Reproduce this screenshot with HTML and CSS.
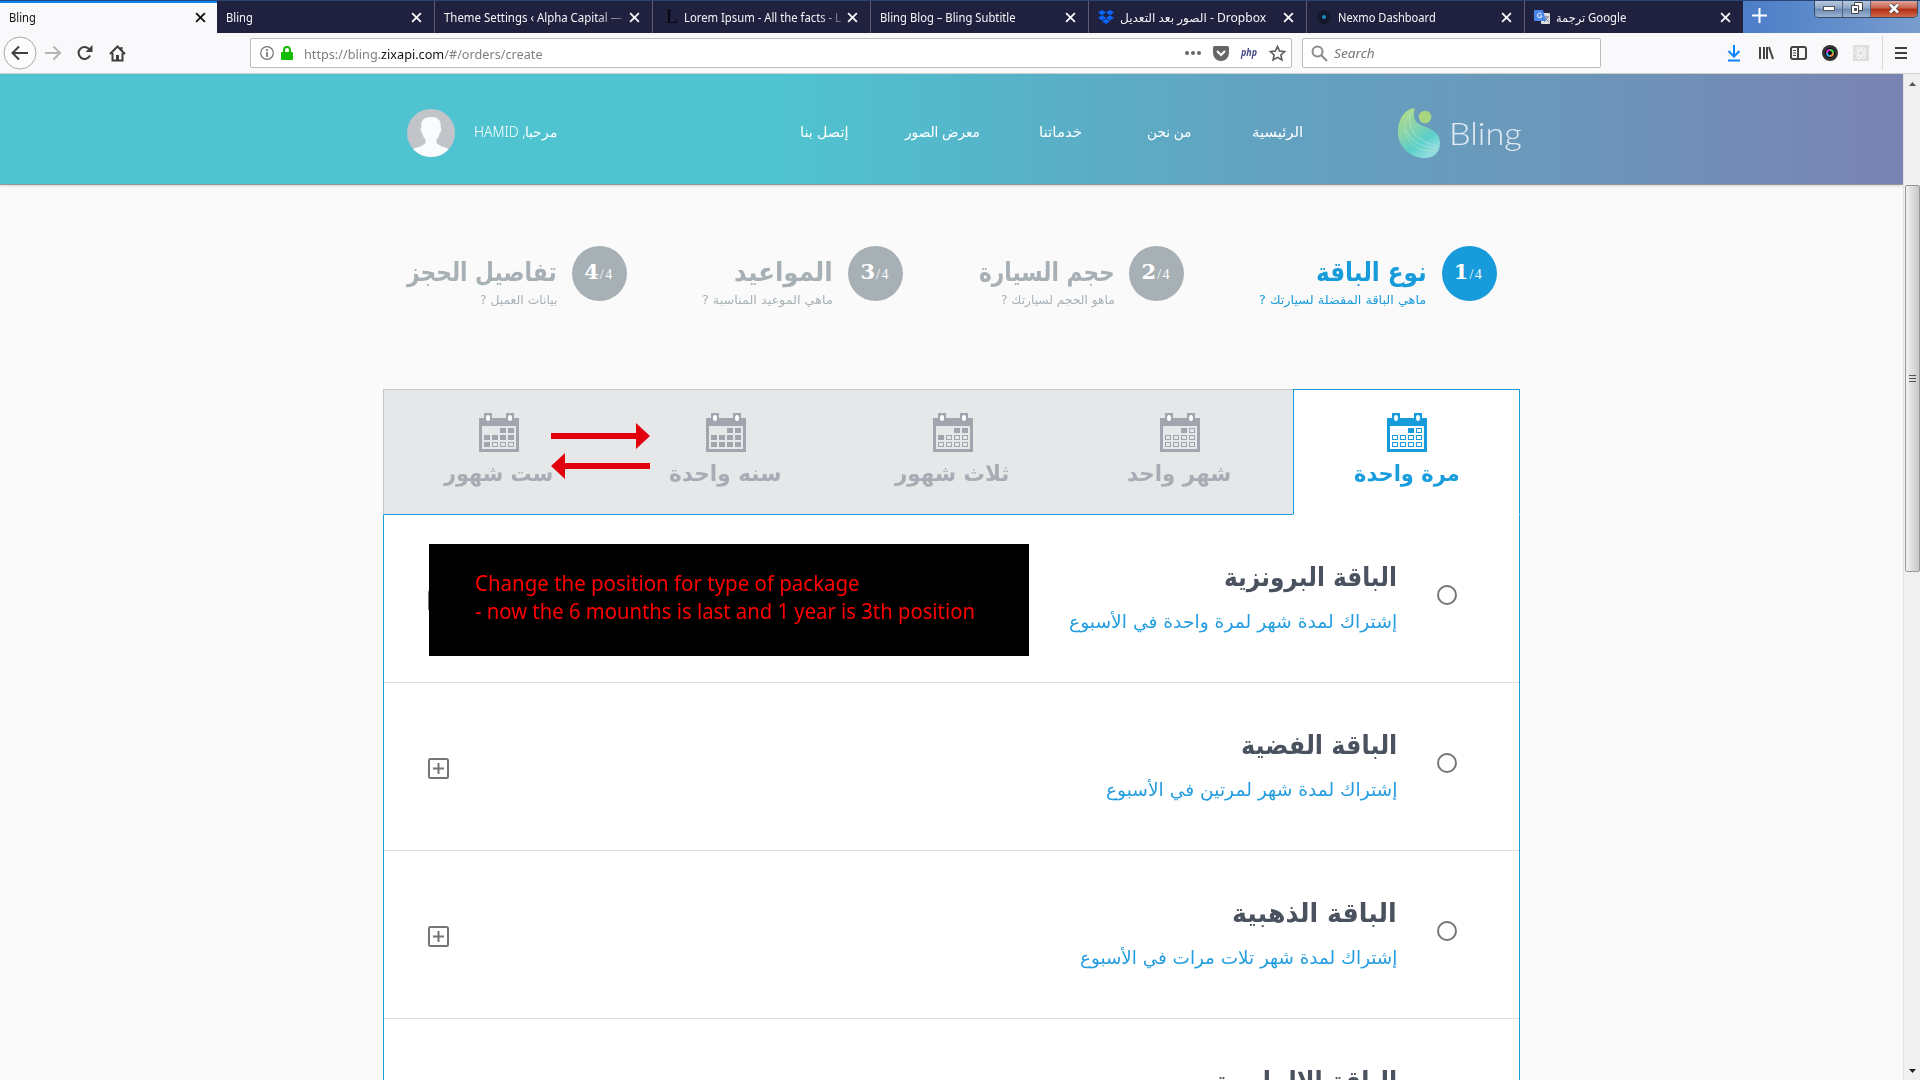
FILE: index.html
```html
<!DOCTYPE html>
<html lang="ar">
<head>
<meta charset="utf-8">
<title>Bling</title>
<link rel="stylesheet" href="styles.css">
</head>
<body>
<svg class="defs" width="0" height="0">
  <defs>
    <symbol id="cal" viewBox="0 0 40 39">
      <path fill="currentColor" fill-rule="evenodd" d="M0 5h5V0h8v5h14V0h8v5h5v34H0zM3 13v23h34V13z"/>
      <ellipse class="hole" cx="9" cy="5" rx="2" ry="3"/><ellipse class="hole" cx="31" cy="5" rx="2" ry="3"/>
    </symbol>
    <symbol id="plus" viewBox="0 0 21 21"><rect x="1" y="1" width="19" height="19" rx="1.500" fill="none" stroke="#757575" stroke-width="2"/><path d="M10.500 5v11M5 10.500h11" stroke="#757575" stroke-width="2"/></symbol>
    <symbol id="x" viewBox="0 0 10 10"><path d="M1 1l8 8M9 1l-8 8" stroke="currentColor" stroke-width="1.700"/></symbol>
    <linearGradient id="leaf" x1="0" y1="0" x2=".6" y2="1"><stop offset="0" stop-color="#b9dc7c"/><stop offset=".45" stop-color="#86d3ae"/><stop offset=".75" stop-color="#5bcfc9"/><stop offset="1" stop-color="#8fdde0"/></linearGradient>
  </defs>
</svg>

<div class="tabs">
  <div class="tab active"><span class="fit" style="width:27px">Bling</span><svg class="close"><use href="#x"/></svg></div>
  <div class="tab"><span class="fit" style="width:27px">Bling</span><svg class="close"><use href="#x"/></svg></div>
  <div class="tab"><span class="fit fade" style="width:178px">Theme Settings ‹ Alpha Capital —</span><svg class="close"><use href="#x"/></svg></div>
  <div class="tab"><i class="fav lorem">L</i><span class="fit fade" style="width:157px">Lorem Ipsum - All the facts - L</span><svg class="close"><use href="#x"/></svg></div>
  <div class="tab"><span class="fit" style="width:136px">Bling Blog – Bling Subtitle</span><svg class="close"><use href="#x"/></svg></div>
  <div class="tab"><svg class="fav" viewBox="0 0 16 16" fill="#0a66ff"><path d="M4 1l4 2.600L4 6.200 0 3.600zM12 1l4 2.600-4 2.600-4-2.600zM4 6.200l4 2.600-4 2.600L0 8.800zM12 6.200l4 2.600-4 2.600-4-2.600zM4 12.300l4-2.600 4 2.600-4 2.600z"/></svg><span class="fit" style="width:146px">الصور بعد التعديل - Dropbox</span><svg class="close"><use href="#x"/></svg></div>
  <div class="tab"><svg class="fav" viewBox="0 0 16 16"><circle cx="8" cy="8" r="7" fill="#15182b"/><circle cx="8" cy="8" r="2" fill="#178fc4"/></svg><span class="fit" style="width:98px">Nexmo Dashboard</span><svg class="close"><use href="#x"/></svg></div>
  <div class="tab"><svg class="fav" viewBox="0 0 16 16"><rect x="7" y="4" width="9" height="11" rx="1" fill="#ddd"/><path d="M10 8h5M12.500 7v1M14 8l-4 5M11 9l4 4" stroke="#7a8590" fill="none"/><path d="M1 1h8l3 11H1a1 1 0 0 1-1-1V2a1 1 0 0 1 1-1z" fill="#4a86e8"/><path d="M7.500 5A2.300 2.300 0 1 0 8 7H5.800" fill="none" stroke="#fff"/></svg><span class="fit" style="width:70px">ترجمة Google</span><svg class="close"><use href="#x"/></svg></div>
  <div class="titlebar">
    <svg class="newtab" width="15" height="15"><path d="M7.500 0v15M0 7.500h15" stroke="#fff" stroke-width="2"/></svg>
    <div class="winbtns">
      <span class="wb"><svg width="12" height="5"><rect x=".5" y=".5" width="11" height="4" fill="#fff" stroke="#555"/></svg></span>
      <span class="wb"><svg width="12" height="12" fill="#fff" stroke="#444"><path d="M3.500.5h8v8h-8z"/><path d="M.5 3.500h7v8h-7z"/><path d="M3.500 6.500h2v2h-2z" fill="#567"/></svg></span>
      <span class="wb red"><svg width="12" height="11"><path d="M2 1.500l8 8M10 1.500l-8 8" stroke="#444" stroke-width="4"/><path d="M2 1.500l8 8M10 1.500l-8 8" stroke="#fff" stroke-width="2.500"/></svg></span>
    </div>
  </div>
</div>

<div class="toolbar">
  <div class="navbtns">
    <svg width="34" height="34" fill="none"><circle cx="17" cy="17" r="16" fill="#fcfcfc" stroke="#a9a9a9"/><path d="M25 17H10M16 10.500L9.500 17l6.500 6.500" stroke="#3f3f3f" stroke-width="2"/></svg>
    <svg width="16" height="16" fill="none"><path d="M0 8h14M8.500 1.500L15 8l-6.500 6.500" stroke="#b5b5b5" stroke-width="2"/></svg>
    <svg width="16" height="16" fill="none"><path d="M13 10.500A6 6 0 1 1 12.500 4.500" stroke="#3f3f3f" stroke-width="2"/><path d="M15.500 0v7h-7z" fill="#3f3f3f"/></svg>
    <svg width="17" height="17" fill="none"><path d="M1 9l7.500-7.500L16 9M3.500 8v7.500h10V8M12.500 2v4" stroke="#3f3f3f" stroke-width="2"/><path d="M7 10h3v6H7z" fill="#3f3f3f"/></svg>
  </div>
  <div class="url">
    <svg width="14" height="14" fill="none"><circle cx="7" cy="7" r="6.300" stroke="#737373" stroke-width="1.200"/><path d="M7 3v2M7 6v5" stroke="#737373" stroke-width="1.700"/></svg>
    <svg class="lock" width="12" height="14"><path d="M3 7V4a3 3 0 0 1 6 0v3" stroke="#12bc00" stroke-width="2" fill="none"/><rect y="6" width="12" height="8" rx="1" fill="#12bc00"/></svg>
    <span class="fit address" style="width:239px">https://bling.<b>zixapi.com</b>/#/orders/create</span>
    <span class="urlicons">
      <svg width="16" height="4" fill="#666"><circle cx="2" cy="2" r="2"/><circle cx="8" cy="2" r="2"/><circle cx="14" cy="2" r="2"/></svg>
      <svg width="16" height="15"><path d="M1.500 0h13A1.500 1.500 0 0 1 16 1.500V7A8 8 0 0 1 0 7V1.500A1.500 1.500 0 0 1 1.500 0z" fill="#666"/><path d="M4 5l4 4 4-4" fill="none" stroke="#fff" stroke-width="2"/></svg>
      <span class="fit php" style="width:16px">php</span>
      <svg width="17" height="16"><path d="M8.500 1.500l2.100 4.600 5 .5-3.700 3.400 1 4.900-4.400-2.500-4.400 2.500 1-4.900L1.400 6.600l5-.5z" fill="none" stroke="#5d5d5d" stroke-width="1.600"/></svg>
    </span>
  </div>
  <div class="search">
    <svg width="17" height="17" fill="none" stroke="#8a8a8a" stroke-width="2"><circle cx="6.500" cy="6.500" r="5"/><path d="M10 10l6 6"/></svg>
    <span class="fit" style="width:41px">Search</span>
  </div>
  <div class="tools">
    <svg width="16" height="17" fill="none" stroke="#0a84ff" stroke-width="2"><path d="M7 0v11M1.500 6L7 11.500 12.500 6M1 15.500h12"/></svg>
    <svg width="16" height="14" fill="none" stroke="#444" stroke-width="2"><path d="M1 1v12M5 1v12M8 1v12M10 1l4 12"/></svg>
    <svg width="16" height="14" fill="none" stroke="#444" stroke-width="2"><rect x="0" y="1" width="15" height="12" rx="2"/><path d="M7 1v12"/><path d="M2 4.500h3M2 7h3M2 9.500h3" stroke-width="1"/></svg>
    <svg width="16" height="16"><circle cx="7" cy="8" r="8" fill="#333"/><circle cx="7" cy="8" r="5" fill="#080808"/><path d="M4 8a3 3 0 0 1 3-3" stroke="#d33adf" stroke-width="2" fill="none"/><path d="M7 5a3 3 0 0 1 3 3" stroke="#39d353" stroke-width="2" fill="none"/><path d="M10 8a3 3 0 0 1-3 3" stroke="#e84" stroke-width="2" fill="none"/><path d="M7 11a3 3 0 0 1-3-3" stroke="#28a7e1" stroke-width="2" fill="none"/></svg>
    <svg class="atom" width="16" height="16" fill="none" stroke="#f6f6f6"><rect width="16" height="16" fill="#dedede" stroke="none"/><ellipse cx="8" cy="8" rx="6" ry="2.500"/><ellipse cx="8" cy="8" rx="6" ry="2.500" transform="rotate(60 8 8)"/><ellipse cx="8" cy="8" rx="6" ry="2.500" transform="rotate(120 8 8)"/></svg>
    <i class="sep"></i>
    <svg width="12" height="12" stroke="#3f3f3f" stroke-width="2"><path d="M0 1h12M0 6h12M0 11h12"/></svg>
  </div>
</div>

<div class="viewport">
<main class="page">
  <header class="head">
    <svg class="avatar" width="48" height="48" viewBox="0 0 48 48"><clipPath id="c"><circle cx="24" cy="24" r="24"/></clipPath><g clip-path="url(#c)"><path fill="#c1c5ca" d="M0 0h48v48H0z"/><path fill="#fafbfc" d="M14.500 18C13 11 18 8 24 8s11 3 9.500 10c1.500 1 .8 5-.7 6-.6 3-1.800 5-3.300 6.500V34c4 4 9 4 12 6v8H6v-8c4-2 9-2 12.500-6v-3.500C17 29 15.800 27 15.200 24c-1.500-1-2.200-5-.7-6z"/></g></svg>
    <span class="fit hello" dir="rtl" style="width:84px">مرحبا, HAMID</span>
    <nav class="menu">
      <a class="fit" dir="rtl" style="width:49px">إتصل بنا</a>
      <a class="fit" dir="rtl" style="width:75px">معرض الصور</a>
      <a class="fit" dir="rtl" style="width:43px">خدماتنا</a>
      <a class="fit" dir="rtl" style="width:44px">من نحن</a>
      <a class="fit" dir="rtl" style="width:51px">الرئيسية</a>
    </nav>
    <div class="logo">
      <svg width="43" height="50" viewBox="0 0 43 50"><path d="M15 0C4 3-1 15 0 26c1 14 13 24 27 24 9 0 15-6 15-15 0-10-8-14-17-17C17 15 14 9 17 1z" fill="url(#leaf)"/><path d="M15 1C9 8 4 18 9 29c5 10 16 15 30 14" fill="none" stroke="#c8e9b0" stroke-opacity=".45"/><path d="M12 6C10 20 15 32 40 38M8 22c5 12 15 17 31 18" fill="none" stroke="#d5f3ee" stroke-opacity=".4"/><circle cx="27" cy="9" r="6.300" fill="#aad581"/></svg>
      <span class="fit brand" style="width:73px">Bling</span>
    </div>
  </header>

  <section class="steps">
    <div class="step"><div class="labels" style="width:149px"><h2 class="fit" dir="rtl" style="width:150px">تفاصيل الحجز</h2><p class="fit" dir="rtl" style="width:77px">بيانات العميل ?</p></div><div class="num"><b>4</b><small>/4</small></div></div>
    <div class="step"><div class="labels" style="width:131px"><h2 class="fit" dir="rtl" style="width:99px">المواعيد</h2><p class="fit" dir="rtl" style="width:131px">ماهي الموعيد المناسبة ?</p></div><div class="num"><b>3</b><small>/4</small></div></div>
    <div class="step"><div class="labels" style="width:136px"><h2 class="fit" dir="rtl" style="width:136px">حجم السيارة</h2><p class="fit" dir="rtl" style="width:114px">ماهو الحجم لسيارتك ?</p></div><div class="num"><b>2</b><small>/4</small></div></div>
    <div class="step current"><div class="labels" style="width:167px"><h2 class="fit" dir="rtl" style="width:111px">نوع الباقة</h2><p class="fit" dir="rtl" style="width:167px">ماهي الباقة المفضلة لسيارتك ?</p></div><div class="num"><b>1</b><small>/4</small></div></div>
  </section>

  <section class="packages">
    <div class="periods">
      <div class="period" data-filled="0011 1111 1000"><svg class="cal" width="40" height="39"><use href="#cal"/></svg><span class="fit" dir="rtl" style="width:109px">ست شهور</span></div>
      <div class="period" data-filled="0011 1111 1111"><svg class="cal" width="40" height="39"><use href="#cal"/></svg><span class="fit" dir="rtl" style="width:112px">سنه واحدة</span></div>
      <div class="period" data-filled="0011 1000 0000"><svg class="cal" width="40" height="39"><use href="#cal"/></svg><span class="fit" dir="rtl" style="width:114px">ثلاث شهور</span></div>
      <div class="period" data-filled="0010 0000 0000"><svg class="cal" width="40" height="39"><use href="#cal"/></svg><span class="fit" dir="rtl" style="width:104px">شهر واحد</span></div>
      <div class="period on" data-filled="0010 0000 0000"><svg class="cal" width="40" height="39"><use href="#cal"/></svg><span class="fit" dir="rtl" style="width:106px">مرة واحدة</span></div>
      <svg class="arrows" width="99" height="56" fill="#e2000f"><path d="M0 10h85V0l14 13-14 13V16H0zM99 40H14V30L0 43l14 13V46h85z"/></svg>
    </div>
    <div class="row"><svg class="plus"><use href="#plus"/></svg><div class="info"><h3 class="fit" dir="rtl" style="width:173px">الباقة البرونزية</h3><p class="fit" dir="rtl" style="width:328px">إشتراك لمدة شهر لمرة واحدة في الأسبوع</p></div><i class="radio"></i>
      <div class="note"><span class="fit" style="width:385px">Change the position for type of package</span><span class="fit" style="width:500px">- now the 6 mounths is last and 1 year is 3th position</span></div>
    </div>
    <div class="row"><svg class="plus"><use href="#plus"/></svg><div class="info"><h3 class="fit" dir="rtl" style="width:156px">الباقة الفضية</h3><p class="fit" dir="rtl" style="width:291px">إشتراك لمدة شهر لمرتين في الأسبوع</p></div><i class="radio"></i></div>
    <div class="row"><svg class="plus"><use href="#plus"/></svg><div class="info"><h3 class="fit" dir="rtl" style="width:165px">الباقة الذهبية</h3><p class="fit" dir="rtl" style="width:317px">إشتراك لمدة شهر تلات مرات في الأسبوع</p></div><i class="radio"></i></div>
    <div class="row"><svg class="plus"><use href="#plus"/></svg><div class="info"><h3 class="fit" dir="rtl" style="width:182px">الباقة الالماسية</h3></div><i class="radio"></i></div>
  </section>
</main>
<div class="scroll">
  <svg width="7" height="4"><path d="M0 4l3.500-4L7 4z" fill="#555"/></svg>
  <div class="thumb"><i></i><i></i><i></i></div>
  <svg class="down" width="7" height="4"><path d="M0 0l3.500 4L7 0z" fill="#222"/></svg>
</div>
</div>
<script src="page.js"></script>
</body>
</html>
```
FILE: styles.css
```css
* { box-sizing: border-box; }
body { margin: 0; width: 1920px; height: 1080px; overflow: hidden; display: flex; flex-direction: column; background: #fafafa; font-family: "Noto Sans", "DejaVu Sans", sans-serif; }
svg { display: block; flex: none; overflow: visible; }
.defs { position: absolute; }
h2, h3, p { margin: 0; font-weight: normal; }

/* Text that is condensed to the width of its box */
.fit { display: block; flex: none; white-space: nowrap; }
.fit > span { display: inline-block; transform-origin: 0 50%; }
.fit[dir="rtl"] > span { transform-origin: 100% 50%; }

.tabs { display: flex; height: 33px; flex: none; border-top: 1px solid #274673; background: linear-gradient(90deg, #4d7ec8, #4d7ec8 1750px, #5d8bcb 1820px, #7a9ccd); }
.tab { width: 218px; height: 32px; display: flex; align-items: center; padding: 0 12px 0 9px; background: #20213f; color: #f5f5f8; font-size: 12px; border-right: 1px solid #5b5c74; }
.tab:nth-child(8) { border-right: 0; }
.tab.active { width: 217px; background: #f9f9fb; color: #111; border-top: 2px solid #0a84ff; border-right: 0; padding: 0 11px 2px 9px; }
.fav { width: 16px; height: 16px; margin-right: 6px; flex: none; }
.lorem { font: 19px/16px "Liberation Serif", serif; color: #05050a; padding-left: 4px; }
.fade { -webkit-mask-image: linear-gradient(90deg, #000 85%, rgba(0,0,0,.3)); mask-image: linear-gradient(90deg, #000 85%, rgba(0,0,0,.3)); }
.close { width: 11px; height: 11px; margin-left: auto; }
.titlebar { flex: 1; display: flex; justify-content: space-between; padding: 0 2px 0 9px; }
.newtab { margin-top: 7px; }
.winbtns { display: flex; height: 17px; border: 1px solid #3a4a63; border-top: 0; border-radius: 0 0 5px 5px; overflow: hidden; }
.wb { width: 28px; display: flex; align-items: center; justify-content: center; border-right: 1px solid #53627a; background: linear-gradient(#b9c9df, #8da6c6 45%, #6c8ab2 50%, #9bb4d3); }
.wb svg { margin-top: -2px; }
.wb.red { width: 46px; border-right: 0; background: linear-gradient(#dfa398, #c9604c 45%, #b02a12 50%, #cf6a4b); }

.toolbar { height: 41px; flex: none; display: flex; align-items: center; background: #f9f9fb; border-bottom: 1px solid #cfcfcf; }
.navbtns { width: 250px; display: flex; align-items: center; padding-left: 3px; }
.navbtns svg + svg { margin-left: 8px; }
.navbtns svg:nth-child(3), .navbtns svg:nth-child(4) { margin-left: 16px; }
.url, .search { height: 30px; background: #fff; border: 1px solid #bdbdbd; border-radius: 2px; display: flex; align-items: center; }
.url { width: 1042px; padding: 0 5px 0 9px; }
.lock { margin: 0 11px 0 7px; }
.address { font-size: 13px; color: #808080; padding-top: 1px; }
.address b { font-weight: normal; color: #111; }
.urlicons { margin-left: auto; display: flex; align-items: center; gap: 12px; }
.php { font: italic bold 10px "Noto Sans", sans-serif; color: #45488a; margin-top: -2px; }
.search { margin-left: 10px; width: 299px; padding-left: 8px; gap: 6px; font-size: 13px; font-style: italic; color: #777; }
.tools { display: flex; align-items: center; margin-left: 126px; gap: 16px; }
.atom { margin-left: -2px; margin-right: 2px; }
.sep { width: 1px; height: 34px; background: #d8d8d8; margin: 0 -4px 0 -5px; }

.viewport { flex: 1; display: flex; min-height: 0; }
.page { width: 1903px; overflow: hidden; }
.head { height: 111px; display: flex; align-items: center; padding: 0 0 0 407px; color: #fff; background: linear-gradient(90deg, #4fc4d0 0, #4fc4d0 770px, #55b5ca 980px, #5cacc5 1110px, #63a2c1 1270px, #6b97ba 1560px, #7984b2 1880px); border-bottom: 1px solid #8f9a9d; box-shadow: 0 1px 3px rgba(0,0,0,.15); }
.avatar { margin-top: 7px; }
.hello, .menu a { font-size: 14px; line-height: 20px; margin-top: 5px; }
.hello { margin-left: 19px; font-weight: 300; }
.menu { display: flex; margin-left: 242px; }
.menu a + a { margin-left: 56px; }
.menu a:nth-child(3) { margin-left: 59px; }
.menu a:nth-child(4) { margin-left: 65px; }
.menu a:nth-child(5) { margin-left: 61px; }
.logo { display: flex; margin: 9px 0 0 95px; gap: 8px; }
.brand { font: 300 31px/51px Lato, sans-serif; color: #e4edf5; }

.steps { display: flex; gap: 75.200px; padding: 61px 0 0 408px; height: 204px; }
.step { display: flex; gap: 15px; color: #a7b0b5; }
.step.current { color: #189bdb; }
.labels { display: flex; flex-direction: column; align-items: flex-end; padding-top: 9px; }
.labels h2 { font: bold 26px/34px "DejaVu Sans", sans-serif; }
.labels p { font: 12px/17px "DejaVu Sans", sans-serif; margin-top: 3px; }
.num { width: 55px; height: 55px; border-radius: 50%; background: #a7b0b5; color: #fff; display: flex; justify-content: center; align-items: baseline; line-height: 51px; font-family: "DejaVu Serif", serif; }
.current .num { background: #189bdb; }
.num b { font-size: 21px; margin-left: -3px; }
.num small { font: 14px "Liberation Serif", serif; letter-spacing: 1.500px; margin: 0 -2px 0 1px; }

.packages { margin-left: 383px; width: 1137px; background: #fff; border: 1px solid #1c9cd9; border-width: 0 1px; }
.periods { position: relative; height: 126px; margin: 0 -1px; display: grid; grid-template-columns: 230px 227px 227px 226px 227px; }
.period { background: #e6e7e9; border-top: 1px solid #c3c6cc; border-bottom: 1px solid #1c9cd9; color: #a8acb4; display: flex; flex-direction: column; align-items: center; padding: 23px 2px 0 0; }
.period:first-child { border-left: 1px solid #c3c6cc; padding-right: 0; }
.period:nth-child(4) { padding-right: 1px; }
.period.on { background: #fff; color: #1a9ddc; border: 1px solid #1c9cd9; border-bottom-color: #fff; padding-right: 0; }
.cal { color: #a1a5ad; }
.on .cal { color: #189bdb; }
.hole { fill: #fff; }
.period .fit { font: bold 22px/30px "DejaVu Sans", sans-serif; margin-top: 7px; }
.arrows { position: absolute; left: 168px; top: 34px; }

.row { position: relative; height: 168px; display: flex; align-items: flex-start; border-bottom: 1px solid #dedede; padding: 0 62px 0 44px; }
.plus { width: 21px; height: 21px; margin-top: 75px; }
.info { margin-left: auto; display: flex; flex-direction: column; align-items: flex-end; padding-top: 43px; }
.info h3 { font: bold 26px/38px "DejaVu Sans", sans-serif; color: #4a5260; }
.info p { font: 18px/28px "DejaVu Sans", sans-serif; color: #239ddf; margin-top: 12px; }
.radio { width: 20px; height: 20px; border: 2px solid #757575; border-radius: 50%; margin: 70px 0 0 40px; }
.note { position: absolute; left: 45px; top: 29px; width: 600px; height: 112px; background: #000; color: #f00; font-size: 22px; line-height: 28px; padding: 24px 46px; }

.scroll { width: 17px; background: #f0f0f0; border-left: 1px solid #e2e2e2; display: flex; flex-direction: column; align-items: center; padding: 8px 0 7px; }
.thumb { margin-top: 99px; width: 15px; height: 387px; border: 1px solid #979797; border-radius: 2px; background: linear-gradient(90deg, #f3f3f3, #dcdcdc 50%, #c8c8cc); display: flex; flex-direction: column; align-items: center; justify-content: center; gap: 2px; }
.thumb i { width: 7px; height: 1px; background: #555; }
.down { margin-top: auto; }
```
FILE: page.js
```js
// Condense or widen labels to the width of their box.
document.querySelectorAll('.fit').forEach(function (el) {
  var inner = document.createElement('span');
  while (el.firstChild) inner.appendChild(el.firstChild);
  el.appendChild(inner);
  inner.style.transform = 'scaleX(' + parseFloat(el.style.width) / inner.offsetWidth + ')';
});

// Day cells of the calendar icons: 1 is a filled day, 0 an empty one.
var NS = 'http://www.w3.org/2000/svg';
document.querySelectorAll('.period').forEach(function (el) {
  var svg = el.querySelector('.cal');
  el.dataset.filled.split(' ').forEach(function (line, r) {
    line.split('').forEach(function (on, c) {
      if (r === 0 && c < 2) return;
      var cell = document.createElementNS(NS, 'rect');
      cell.setAttribute('x', 5.5 + c * 8);
      cell.setAttribute('y', 15.5 + r * 7);
      cell.setAttribute('width', 5);
      cell.setAttribute('height', 4);
      cell.setAttribute('stroke', 'currentColor');
      cell.setAttribute('fill', on === '1' ? 'currentColor' : 'none');
      svg.appendChild(cell);
    });
  });
});
```
